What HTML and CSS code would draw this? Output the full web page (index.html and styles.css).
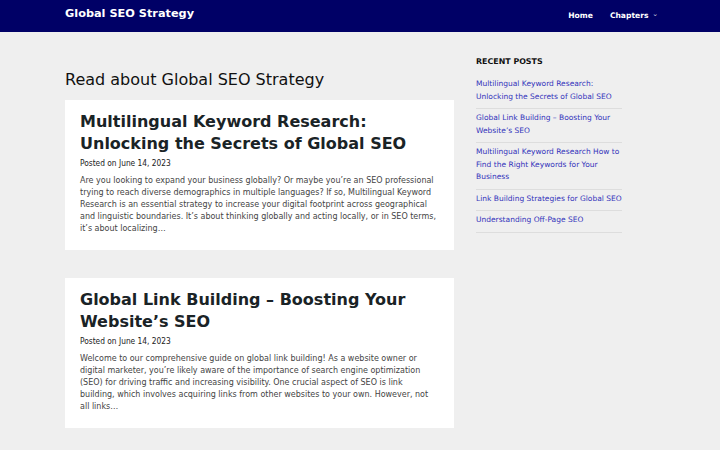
FILE: index.html
```html
<!DOCTYPE html>
<html>
<head>
<meta charset="utf-8">
<link rel="stylesheet" href="styles.css">
</head>
<body>
<header class="site-header">
  <div class="container header-inner">
    <div class="site-title">Global SEO Strategy</div>
    <nav class="nav">
      <a class="nav-link" href="#">Home</a>
      <a class="nav-link" href="#">Chapters <span class="caret">&#8964;</span></a>
    </nav>
  </div>
</header>
<div class="container layout">
  <main class="main">
    <h1 class="page-title">Read about Global SEO Strategy</h1>
    <article class="card">
      <h2 class="post-title">Multilingual Keyword Research: Unlocking the Secrets of Global SEO</h2>
      <div class="meta">Posted on June 14, 2023</div>
      <p class="excerpt">Are you looking to expand your business globally? Or maybe you’re an SEO professional trying to reach diverse demographics in multiple languages? If so, Multilingual Keyword Research is an essential strategy to increase your digital footprint across geographical and linguistic boundaries. It’s about thinking globally and acting locally, or in SEO terms, it’s about localizing…</p>
    </article>
    <article class="card">
      <h2 class="post-title">Global Link Building – Boosting Your Website’s SEO</h2>
      <div class="meta">Posted on June 14, 2023</div>
      <p class="excerpt">Welcome to our comprehensive guide on global link building! As a website owner or digital marketer, you’re likely aware of the importance of search engine optimization (SEO) for driving traffic and increasing visibility. One crucial aspect of SEO is link building, which involves acquiring links from other websites to your own. However, not all links…</p>
    </article>
  </main>
  <aside class="sidebar">
    <h3 class="widget-title">RECENT POSTS</h3>
    <ul class="recent">
      <li><a href="#">Multilingual Keyword Research: Unlocking the Secrets of Global SEO</a></li>
      <li><a href="#">Global Link Building – Boosting Your Website’s SEO</a></li>
      <li><a href="#">Multilingual Keyword Research How to Find the Right Keywords for Your Business</a></li>
      <li><a href="#">Link Building Strategies for Global SEO</a></li>
      <li><a href="#">Understanding Off-Page SEO</a></li>
    </ul>
  </aside>
</div>
</body>
</html>
```
FILE: styles.css
```css
* { box-sizing: border-box; }
html, body { margin: 0; padding: 0; }
body {
  background: #efefef;
  font-family: "DejaVu Sans", sans-serif;
  color: #222;
}
.container { width: 590px; margin: 0 auto; }
.site-header { background: #000066; height: 32px; }
.header-inner { display: flex; justify-content: space-between; align-items: flex-start; }
.site-title {
  color: #fff; font-weight: bold; font-size: 11.3px;
  padding-top: 7px; line-height: 14px;
}
.nav { display: flex; gap: 17px; padding-top: 10px; margin-right: -3px; }
.nav-link { color: #fff; text-decoration: none; font-weight: bold; font-size: 7.6px; line-height: 12px; }
.caret { font-size: 7px; font-weight: normal; color: #ccd; position: relative; top: -2px; margin-left: 1px; }
.layout { display: grid; grid-template-columns: 389px 150px; column-gap: 22px; }
.page-title { font-size: 16px; font-weight: normal; margin: 37px 0 9px; line-height: 22px; color: #111; }
.card { background: #fff; padding: 11px 15px 15px; margin-bottom: 28px; }
.post-title { font-size: 16px; font-weight: bold; line-height: 22px; margin: 0 0 2px; color: #1a2326; }
.meta { font-family: "DejaVu Sans Condensed", "DejaVu Sans", sans-serif; font-size: 8.3px; color: #222; margin-bottom: 6px; line-height: 12px; }
.excerpt { font-size: 8px; line-height: 12px; color: #444; margin: 0; }
.sidebar { padding-top: 24px; }
.widget-title { font-size: 7.9px; font-weight: bold; margin: 0 0 10px; color: #111; line-height: 12px; }
.recent { list-style: none; margin: 0; padding: 0; width: 146px; }
.recent li { border-bottom: 1px solid #ddd; padding: 3px 0 5px; font-size: 7.5px; line-height: 12.5px; }
.recent li:first-child { padding-top: 0; }
.recent a { color: #3333bb; text-decoration: none; }
```
